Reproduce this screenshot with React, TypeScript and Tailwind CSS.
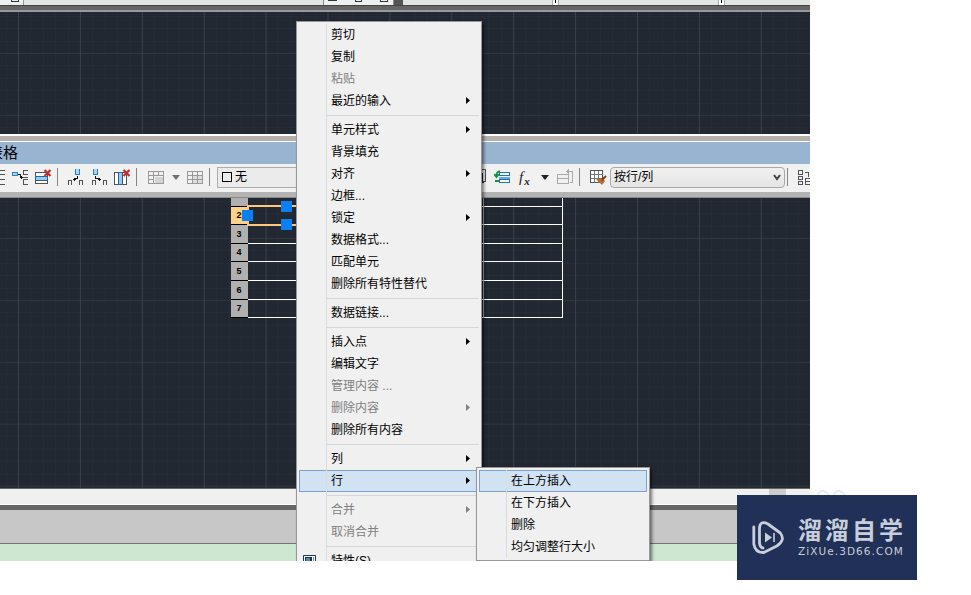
import clsx from "clsx";
import { ReactNode } from "react";

interface MenuEntry {
  label?: string;
  disabled?: boolean;
  submenu?: boolean;
  active?: boolean;
  icon?: boolean;
}

// an entry without a label is a separator
const contextMenu: MenuEntry[] = [
  { label: "剪切" },
  { label: "复制" },
  { label: "粘贴", disabled: true },
  { label: "最近的输入", submenu: true },
  {},
  { label: "单元样式", submenu: true },
  { label: "背景填充" },
  { label: "对齐", submenu: true },
  { label: "边框..." },
  { label: "锁定", submenu: true },
  { label: "数据格式..." },
  { label: "匹配单元" },
  { label: "删除所有特性替代" },
  {},
  { label: "数据链接..." },
  {},
  { label: "插入点", submenu: true },
  { label: "编辑文字" },
  { label: "管理内容 ...", disabled: true },
  { label: "删除内容", disabled: true, submenu: true },
  { label: "删除所有内容" },
  {},
  { label: "列", submenu: true },
  { label: "行", submenu: true, active: true },
  {},
  { label: "合并", disabled: true, submenu: true },
  { label: "取消合并", disabled: true },
  {},
  { label: "特性(S)", icon: true },
];

const rowMenu: MenuEntry[] = [
  { label: "在上方插入", active: true },
  { label: "在下方插入" },
  { label: "删除" },
  { label: "均匀调整行大小" },
];

const tableRows = [
  { number: "", height: "h-[9px]" },
  { number: "2", height: "h-[18px]" },
  { number: "3", height: "h-[19px]" },
  { number: "4", height: "h-[18px]" },
  { number: "5", height: "h-[19px]" },
  { number: "6", height: "h-[19px]" },
  { number: "7", height: "h-[18px]" },
];

interface IconProps {
  children: ReactNode;
  className?: string;
  width?: number;
}

const Icon = ({ children, className, width = 17 }: IconProps) => (
  <svg
    className={clsx("shrink-0", className)}
    width={width}
    height="17"
    viewBox={`0 0 ${width} 17`}
    fill="none"
    stroke="#50545a"
    shapeRendering="crispEdges"
  >
    {children}
  </svg>
);

const RedCross = () => (
  <path
    d="M9.500 1l6 6M15.500 1l-6 6"
    stroke="#c42b2b"
    strokeWidth="2.200"
    shapeRendering="auto"
  />
);

const Divider = ({ className }: { className?: string }) => (
  <div className={clsx("h-[18px] w-px shrink-0 bg-[#858585]", className)} />
);

const DownArrow = ({ className }: { className?: string }) => (
  <svg className={clsx("shrink-0", className)} width="8" height="5">
    <path d="M0 0h8L4 5z" fill="currentColor" />
  </svg>
);

const Menu = ({ entries }: { entries: MenuEntry[] }) => (
  <>
    {entries.map(({ label, disabled, submenu, active, icon }, index) =>
      label ? (
        <div
          key={index}
          className={clsx(
            "flex h-[22px] items-center",
            active && "bg-[#d1e2f2] shadow-[inset_0_0_0_1px_#7da2ce]",
            disabled ? "text-[#808080]" : "text-black"
          )}
        >
          <div className="flex h-full w-7 shrink-0 items-center border-r border-[#d9dcde] pl-1">
            {icon && (
              <svg width="13" height="13" viewBox="0 0 13 13">
                <path d="M.5.5h12v12H.5z" fill="#fff" stroke="#1d3557" />
                <path d="M2 2h7v7H2z" fill="#1d3557" />
                <path d="M3 3h4v4H3z" fill="#4f8cc4" />
                <path d="M10 2h1v9h-1z" fill="#6f91b5" />
              </svg>
            )}
          </div>
          <span className="flex-1 pl-1 leading-[18px] whitespace-pre">
            {label}
          </span>
          {submenu && (
            <svg width="4" height="7" className="mr-[9px] mb-px shrink-0">
              <path d="M0 0v7l4-3.500z" fill="currentColor" />
            </svg>
          )}
        </div>
      ) : (
        <div key={index} className="ml-[27px] h-[7px] border-l border-[#d9dcde] pt-[3px]">
          <div className="h-px bg-[#d5d8d9]" />
        </div>
      )
    )}
  </>
);

interface GridProps {
  id: string;
  x: number;
  y: number;
}

// drawing area background, one major line every five minor ones
const Grid = ({ id, x, y }: GridProps) => (
  <svg className="absolute inset-0 h-full w-full" shapeRendering="crispEdges">
    <defs>
      <pattern
        id={id}
        x={x}
        y={y}
        width="61.9"
        height="61.9"
        patternUnits="userSpaceOnUse"
      >
        <path
          d="M12.9 0v62M25.3 0v62M37.6 0v62M50 0v62M0 12.9h62M0 25.3h62M0 37.6h62M0 50h62"
          stroke="#252c35"
        />
        <path d="M0 .5h62" stroke="#303740" />
        <path d="M.5 0v62" stroke="#39414a" />
      </pattern>
    </defs>
    <rect width="100%" height="100%" fill={`url(#${id})`} />
  </svg>
);

const TopStrip = () => (
  <div className="flex h-[5px] bg-[#e2e5e2]">
    <div className="flex w-6 justify-end border-r border-[#999] bg-[#eef0f2] pr-[4px]">
      <div className="h-[2px] w-2 border border-t-0 border-[#333]" />
    </div>
    <div className="w-[299px]" />
    <div className="flex w-[71px] items-start gap-[18px] border-x border-[#888] bg-[#eef0f2] pl-1">
      <div className="h-px w-[9px] bg-[#333]" />
      <div className="h-[2px] w-[7px] border border-t-0 border-[#333]" />
      <div className="h-[2px] w-2 border border-t-0 border-[#333]" />
    </div>
    <div className="w-[9px] bg-[#555]" />
    <div className="w-[149px]" />
    <div className="flex w-[7px] justify-center border-x border-[#aaa] bg-white">
      <div className="h-[3px] w-px bg-black" />
    </div>
    <div className="w-[159px]" />
    <div className="flex w-[7px] justify-center border-x border-[#aaa] bg-white">
      <div className="h-[3px] w-px bg-black" />
    </div>
  </div>
);

const Toolbar = () => (
  <div className="flex h-7 items-center overflow-hidden bg-[#f1f1f1] pb-[2px]">
    <Icon width={6}>
      <path d="M0 1.5h5M0 5.5h5M0 10.5h5M0 15.5h5" />
    </Icon>
    <Icon className="ml-[6px]">
      <path d="M.5 3.5h5v3h-5z" fill="#a9d8f5" stroke="#2d7fb8" />
      <path d="M16 1.5h-5v4h5M16 10.5h-5v5h5M16 8.5h-5" />
      <path d="M6 5.5h2v3h3M9 7v3" stroke="#111" />
    </Icon>
    <Icon className="ml-[6px]">
      <path d="M.5 3.5h12v4H.5z" fill="#fff" />
      <path d="M.5 7.5h12v4H.5z" fill="#8fcdf4" stroke="#2b66a0" />
      <path d="M.5 11.5h12v3H.5z" fill="#fff" />
      <RedCross />
    </Icon>
    <Divider className="ml-[5px]" />
    <Icon className="ml-[9px]">
      <path d="M8.500 0v5h4v-5" fill="#a9d8f5" stroke="#2d7fb8" />
      <path d="M1.500 16v-5h3v5M12.500 16v-5h3v5" />
      <path d="M10.500 7v2h-3v3M6 10.500h3" stroke="#111" />
    </Icon>
    <Icon className="ml-[7px]">
      <path d="M2.500 0v5h4v-5" fill="#a9d8f5" stroke="#2d7fb8" />
      <path d="M1.500 16v-5h3v5M12.500 16v-5h3v5" />
      <path d="M4.500 7v2h4v3M7 10.500h3" stroke="#111" />
    </Icon>
    <Icon className="ml-[6px]">
      <path d="M.5 3.500h4v12h-4z" fill="#fff" />
      <path d="M4.500 3.500h4v12h-4z" fill="#8fcdf4" stroke="#2b66a0" />
      <path d="M8.500 3.500h4v12h-4z" fill="#fff" />
      <RedCross />
    </Icon>
    <Divider className="ml-[5px]" />
    <Icon className="ml-[11px]">
      <path d="M6.500 7.500h9v7h-9z" fill="#d4d4d4" stroke="none" />
      <path d="M.5 2.500h15v12H.5zM.5 6.500h15M.5 10.500h5M5.500 2.500v12M10.500 2.500v4" stroke="#999" />
    </Icon>
    <DownArrow className="ml-[7px] text-[#707070]" />
    <Icon className="ml-[7px]">
      <path d="M5.500 6.500h10v8h-10z" fill="#dedede" stroke="none" />
      <path d="M.5 2.500h15v12H.5zM.5 6.500h15M.5 10.500h15M5.500 2.500v12M10.500 2.500v12" stroke="#999" />
    </Icon>
    <Divider className="ml-[5px]" />
    <div className="ml-[7px] flex h-[21px] w-[248px] shrink-0 items-center gap-[3px] border border-[#adadad] bg-[#ebebeb] pl-1 text-xs">
      <div className="size-[10px] border border-black" />
      <span>无</span>
    </div>
    <Icon className="ml-[5px]">
      <path d="M.5.5h15v12H.5z" />
      <path d="M12.500 4v8M9 13.500h5" stroke="#222" />
    </Icon>
    <Icon className="ml-[7px]">
      <path d="M5.500 3.500h10v3h-10z" fill="#fff" stroke="#1f70b4" />
      <path d="M5.500 10.500h10v3h-10z" fill="#fff" stroke="#1f70b4" />
      <path d="M5 8.500h11" stroke="#5aaee6" strokeWidth="2" />
      <path
        d="M6 2.500q-3.500 0-3.500 4M0 5l2.500 3L5 5M1 12h4"
        stroke="#16913e"
        strokeWidth="1.800"
        shapeRendering="auto"
      />
    </Icon>
    <span className="ml-[8px] w-[15px] shrink-0 font-['Liberation_Serif',serif] text-[15px] leading-4 text-[#222] italic">
      f<sub className="ml-px text-[11px] font-bold">x</sub>
    </span>
    <DownArrow className="ml-[7px] text-[#222]" />
    <Icon className="ml-[8px]">
      <path d="M.5 5.500h11v9H.5zM.5 9.500h11M10 2.500h5.500v11H13M12 .5l-2 2 2 2" stroke="#aaa" />
    </Icon>
    <Divider className="ml-[5px]" />
    <Icon className="ml-[10px]">
      <path d="M.5 1.500h12v12H.5z" fill="#fff" />
      <path d="M.5 5.500h12M.5 9.500h12M4.500 1.500v12M8.500 1.500v12" stroke="#777" />
      <path d="M6 10l6 6 3-4-3-3z" fill="#b96a32" stroke="none" shapeRendering="auto" />
      <path d="M12 11l4-4" stroke="#7a3d18" strokeWidth="2" shapeRendering="auto" />
    </Icon>
    <div className="ml-[3px] flex h-[21px] w-[175px] shrink-0 items-center justify-between rounded-sm border border-[#a8a8a8] bg-gradient-to-b from-[#f0f0f0] to-[#e5e5e5] pr-[3px] pl-[3px] text-xs">
      <span>按行/列</span>
      <svg width="8" height="7" fill="none" stroke="#444" strokeWidth="2">
        <path d="M1 1l3 4 3-4" />
      </svg>
    </div>
    <Divider className="ml-[2px]" />
    <Icon className="ml-[9px]">
      <path d="M1.500 1.500h4v4h-4zM1.500 7.500h4v3h-4zM1.500 12.500h4v3h-4zM8 3.500h3v4M8.500 9.500h8v6h-8zM9 12.500h6" />
    </Icon>
  </div>
);

const DrawingTable = () => (
  <div className="relative ml-[231px] flex w-[332px] flex-col">
    {tableRows.map(({ number, height }) => (
      <div key={number} className={clsx("flex", height)}>
        <div
          className={clsx(
            "flex w-[17px] items-center justify-center border-b border-black pr-px font-['Liberation_Sans',sans-serif] text-[9px] leading-none font-bold text-black",
            number === "2" ? "bg-[#ffd287]" : "bg-[#b0b0b0]"
          )}
        >
          {number}
        </div>
        <div className="w-[236px] border-r border-b border-white border-r-[#aaa]" />
        <div className="flex-1 border-r border-b border-white" />
      </div>
    ))}
    {/* selected cell with its grips */}
    <div className="absolute top-[7px] left-4 h-[21px] w-[150px] border-2 border-[#ffc77d]" />
    <div className="absolute top-[3px] left-[50px] size-[11px] bg-[#0c80f2]" />
    <div className="absolute top-[21px] left-[50px] size-[11px] bg-[#0c80f2]" />
    <div className="absolute top-[12px] left-[11px] size-[11px] bg-[#0c80f2]" />
  </div>
);

const Watermark = () => (
  <div className="absolute top-[495px] left-[737px] flex h-[85px] w-[180px] bg-[#213056] pt-[25px] pl-[15px] text-[#c9cedb]">
    <svg width="34" height="36" viewBox="0 0 34 36" fill="none" stroke="currentColor">
      <path
        d="M1.800 7v17q1.500 9 10 8.500l13-6.500q9-6 3.500-13L16 4q-8-4-8.500 4v15q.5 4.500 3.500 5"
        strokeWidth="2.800"
        strokeLinejoin="round"
        strokeLinecap="round"
      />
      <path d="M13 12.500v10l7-5z" fill="currentColor" stroke="none" />
      <path d="M22 13v9" strokeWidth="1.600" />
    </svg>
    <div className="ml-[12px] whitespace-nowrap">
      <div className="-mt-[3px] text-[24px] leading-[28px] font-bold tracking-[3px]">
        溜溜自学
      </div>
      <div className="flex w-[105px] justify-between font-['DejaVu_Sans',sans-serif] text-[10.500px] leading-3">
        {[..."ZiXUe.3D66.COM"].map((letter, index) => (
          <span key={index}>{letter}</span>
        ))}
      </div>
    </div>
  </div>
);

const App = () => {
  return (
    <div className="relative h-[595px] w-[971px] overflow-hidden bg-white font-['Liberation_Sans','Noto_Sans_CJK_SC',sans-serif]">
      <div className="relative h-[561px] w-[810px] overflow-hidden">
        <TopStrip />
        <div className="h-[7px] border-t border-b-2 border-t-[#444] border-b-[#999] bg-[#666]" />
        <div className="relative h-[122px] bg-[#212831]">
          <Grid id="grid-top" x={18} y={41} />
        </div>

        {/* text editor bar */}
        <div className="h-2 border-t-2 border-b border-white bg-[#b3b0ad]" />
        <div className="h-[22px] bg-[#99b4d1] text-[15px] leading-[22px]">
          <div className="-ml-[12px] text-black">表格</div>
        </div>
        <Toolbar />
        <div className="h-[6px] border-b border-[#8a8a8a] bg-[#b3b3b3]" />

        <div className="relative h-[291px] border-b border-[#666] bg-[#212831]">
          <Grid id="grid-bottom" x={18} y={40} />
          <DrawingTable />
        </div>
        <div className="flex h-4 border-b border-white bg-[#f0f0f0]">
          <div className="ml-[769px] w-[17px] bg-[#cdcdcd]" />
        </div>
        <div className="h-[5px] bg-[#666]" />
        <div className="h-[33px] bg-[#c7c7c7]" />
        <div className="h-[18px] border-t border-[#6f7771] bg-[#cde8d0]" />

        {/* context menu */}
        <div className="absolute top-[21px] left-[296px] w-[186px] border border-[#979797] bg-[#f0f0f0] p-[2px] text-xs shadow-[2px_2px_3px_rgba(0,0,0,0.5)]">
          <Menu entries={contextMenu} />
        </div>
        <div className="absolute top-[467px] left-[476px] h-[94px] w-[174px] border border-[#979797] bg-[#f0f0f0] p-[2px] text-xs shadow-[2px_2px_3px_rgba(0,0,0,0.5)]">
          <Menu entries={rowMenu} />
        </div>
      </div>

      <div className="absolute top-[490px] left-[817px] flex gap-1">
        <div className="size-3 rounded-full border-2 border-[#e3e9f1]" />
        <div className="size-3 rounded-full border-2 border-[#e3e9f1]" />
      </div>
      <Watermark />
    </div>
  );
};

export default App;
